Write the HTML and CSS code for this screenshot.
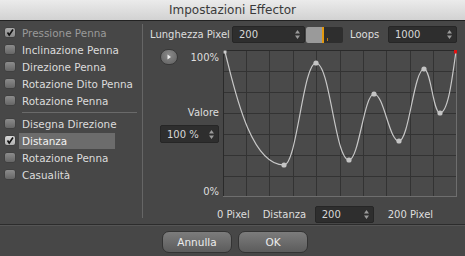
FILE: index.html
```html
<!DOCTYPE html>
<html>
<head>
<meta charset="utf-8">
<link rel="stylesheet" href="styles.css">
</head>
<body>
<div class="win">
  <div class="titlebar">Impostazioni Effector</div>
  <div class="main">
    <div class="left">
      <div class="item disabled"><span class="cb checked dis"><svg viewBox="0 0 10 9" width="10" height="9"><path d="M2.5 4.5 L4.2 7 L8 1.5" fill="none" stroke="#111" stroke-width="1.6"/></svg></span><span class="lbl">Pressione Penna</span></div>
      <div class="item"><span class="cb"></span><span class="lbl">Inclinazione Penna</span></div>
      <div class="item"><span class="cb"></span><span class="lbl">Direzione Penna</span></div>
      <div class="item"><span class="cb"></span><span class="lbl">Rotazione Dito Penna</span></div>
      <div class="item"><span class="cb"></span><span class="lbl">Rotazione Penna</span></div>
      <div class="sep"></div>
      <div class="item"><span class="cb"></span><span class="lbl">Disegna Direzione</span></div>
      <div class="item"><span class="cb checked"><svg viewBox="0 0 10 9" width="10" height="9"><path d="M2.5 4.5 L4.2 7 L8 1.5" fill="none" stroke="#111" stroke-width="1.6"/></svg></span><span class="lbl sel">Distanza</span></div>
      <div class="item"><span class="cb"></span><span class="lbl">Rotazione Penna</span></div>
      <div class="item"><span class="cb"></span><span class="lbl">Casualità</span></div>
    </div>
    <div class="right">
      <div class="row1">
        <span class="txt lp">Lunghezza Pixel</span>
        <span class="field w73"><span class="val">200</span><svg class="step" viewBox="0 0 5 9" width="5" height="9"><path d="M2.5 0 L5 3.5 L0 3.5Z M2.5 9 L5 5.5 L0 5.5Z" fill="#9a9a9a"/></svg></span>
        <span class="slider"><span class="fill"></span><span class="mark"></span><span class="tick"></span></span>
        <span class="txt loops">Loops</span>
        <span class="field w69"><span class="val">1000</span><svg class="step" viewBox="0 0 5 9" width="5" height="9"><path d="M2.5 0 L5 3.5 L0 3.5Z M2.5 9 L5 5.5 L0 5.5Z" fill="#9a9a9a"/></svg></span>
      </div>
      <div class="mid">
        <div class="axis">
          <div class="toprow">
            <span class="play"><svg viewBox="0 0 6 6" width="6" height="6"><path d="M1.5 0.5 L5 3 L1.5 5.5Z" fill="#eee"/></svg></span>
            <span class="txt">100%</span>
          </div>
          <div class="txt r valore">Valore</div>
          <span class="field w59"><span class="val">100 %</span><svg class="step" viewBox="0 0 5 9" width="5" height="9"><path d="M2.5 0 L5 3.5 L0 3.5Z M2.5 9 L5 5.5 L0 5.5Z" fill="#9a9a9a"/></svg></span>
          <div class="txt r zero">0%</div>
        </div>
        <svg class="graph" viewBox="0 0 234 147" width="234" height="147">
          <rect x="0" y="0" width="234" height="147" fill="#4a4a4a"/>
          <g stroke="#333" stroke-width="1">
            <path d="M23.5 0V147M46.5 0V147M70.5 0V147M93.5 0V147M117.5 0V147M140.5 0V147M163.5 0V147M187.5 0V147M210.5 0V147"/>
            <path d="M0 21.5H234M0 42.5H234M0 63.5H234M0 84.5H234M0 105.5H234M0 126.5H234"/>
          </g>
          <path d="M0.5 0V147M0 0.5H234" stroke="#2a2a2a"/>
          <path d="M233.5 0V147M0 146.5H234" stroke="#6e6e6e"/>
          <path d="M2 2 C10 32 26 115 61 115 C74 115 80 13 93 13 C107 13 112 110 126 110 C136 110 141 44 151 44 C161 44 166 91 176 91 C186 91 191 19 201 19 C208 19 210 63 217 63 C225 63 229 30 233 1" fill="none" stroke="#c8c8c8" stroke-width="1.2"/>
          <rect x="0.5" y="0.5" width="3" height="3" fill="#ccc"/>
          <g fill="#c4c4c4">
            <circle cx="61" cy="115" r="2.6"/>
            <circle cx="93" cy="13" r="2.6"/>
            <circle cx="126" cy="110" r="2.6"/>
            <circle cx="151" cy="44" r="2.6"/>
            <circle cx="176" cy="91" r="2.6"/>
            <circle cx="201" cy="19" r="2.6"/>
            <circle cx="217" cy="63" r="2.6"/>
          </g>
          <rect x="231" y="0" width="3.5" height="3.5" fill="#e01010"/>
        </svg>
      </div>
      <div class="row3">
        <span class="txt p0">0 Pixel</span>
        <span class="txt dist">Distanza</span>
        <span class="field w59"><span class="val">200</span><svg class="step" viewBox="0 0 5 9" width="5" height="9"><path d="M2.5 0 L5 3.5 L0 3.5Z M2.5 9 L5 5.5 L0 5.5Z" fill="#9a9a9a"/></svg></span>
        <span class="txt p200">200 Pixel</span>
      </div>
    </div>
  </div>
  <div class="footer">
    <button class="btn">Annulla</button>
    <button class="btn">OK</button>
  </div>
</div>
</body>
</html>
```

FILE: styles.css
```css
* { box-sizing: border-box; }
html, body { margin: 0; padding: 0; }
body {
  width: 465px;
  height: 256px;
  overflow: hidden;
  background: #474747;
  font-family: "DejaVu Sans", sans-serif;
  font-size: 10px;
  color: #dcdcdc;
}
.win { width: 465px; height: 256px; display: flex; flex-direction: column; }
.titlebar {
  height: 21px;
  background: linear-gradient(#ebebeb, #d2d2d2);
  border-bottom: 1px solid #222;
  color: #3a3a3a;
  font-size: 12px;
  text-align: center;
  line-height: 20px;
}
.main { height: 203px; display: flex; }
.left {
  width: 143px;
  margin: 3px 0 6px 0;
  border-right: 1px solid #666;
}
.item {
  height: 17px;
  display: flex;
  align-items: center;
  padding-left: 5px;
}
.cb {
  width: 10px;
  height: 9px;
  border-radius: 2px;
  background: linear-gradient(#8c8c8c, #666);
  box-shadow: 0 0 0 0.5px #3a3a3a;
  display: inline-flex;
  flex-shrink: 0;
}
.cb.checked { background: linear-gradient(#d8d8d8, #b0b0b0); }
.cb.dis { background: linear-gradient(#a8a8a8, #888); }
.lbl {
  margin-left: 4px;
  padding-left: 3px;
  height: 16px;
  line-height: 16px;
  font-size: 10.4px;
  white-space: nowrap;
}
.sel { width: 96px; background: #6c6c6c; color: #f2f2f2; }
.disabled .lbl { color: #9a9a9a; }
.sep {
  height: 1px;
  background: #6a6a6a;
  margin: 3px 5px 2px 22px;
}
.right { flex: 1; padding: 5px 0 0 5px; display: flex; flex-direction: column; }
.txt { white-space: nowrap; color: #dedede; }
.row1 { display: flex; align-items: center; height: 17px; }
.lp { margin-left: 2px; width: 82px; }
.field {
  display: inline-flex;
  align-items: center;
  justify-content: space-between;
  height: 17px;
  background: #2e2e2e;
  border: 1px solid #262626;
  border-radius: 2px;
  padding: 0 4px 0 6px;
  color: #d8d8d8;
}
.w73 { width: 73px; }
.w69 { width: 69px; }
.w59 { width: 59px; }
.step { flex-shrink: 0; }
.slider {
  position: relative;
  width: 37px;
  height: 16px;
  margin-left: 1px;
  background: #2e2e2e;
  border-radius: 2px;
  display: inline-flex;
}
.slider .fill { width: 16px; height: 100%; background: #9a9a9a; border-radius: 2px 0 0 2px; }
.slider .mark { width: 2px; height: 100%; background: #e39a10; }
.slider .tick { position: absolute; left: 21px; bottom: 2px; width: 1px; height: 3px; background: #c07a10; }
.loops { margin-left: 7px; width: 38px; }
.mid { display: flex; margin-top: 6px; }
.axis { width: 75px; display: flex; flex-direction: column; align-items: flex-end; padding-right: 4px; }
.toprow { width: 100%; height: 16px; display: flex; align-items: center; justify-content: space-between; padding-left: 12px; }
.play {
  width: 18px; height: 16px; border-radius: 8px;
  background: radial-gradient(circle at 50% 35%, #8a8a8a, #5e5e5e);
  border: 1px solid #383838;
  display: inline-flex; align-items: center; justify-content: center;
}
.r { text-align: right; }
.valore { margin-top: 41px; line-height: 14px; }
.axis .field { margin-top: 5px; height: 18px; }
.zero { margin-top: 42px; line-height: 14px; }
.graph { display: block; margin-top: 1px; }
.row3 { display: flex; align-items: center; height: 16px; margin-top: 7px; padding-left: 69px; }
.dist { margin-left: 13px; width: 52px; }
.p200 { margin-left: 14px; }
.footer {
  flex: 1;
  border-top: 1px solid #2c2c2c;
  box-shadow: inset 0 1px 0 #555;
  display: flex;
  align-items: flex-start;
  padding: 6px 0 0 162px;
  gap: 6px;
}
.btn {
  width: 70px;
  height: 22px;
  border-radius: 7px;
  border: 1px solid #333;
  background: linear-gradient(#7c7c7c, #5c5c5c);
  color: #ececec;
  font-family: "DejaVu Sans", sans-serif;
  font-size: 10.5px;
  padding: 0;
}
```
